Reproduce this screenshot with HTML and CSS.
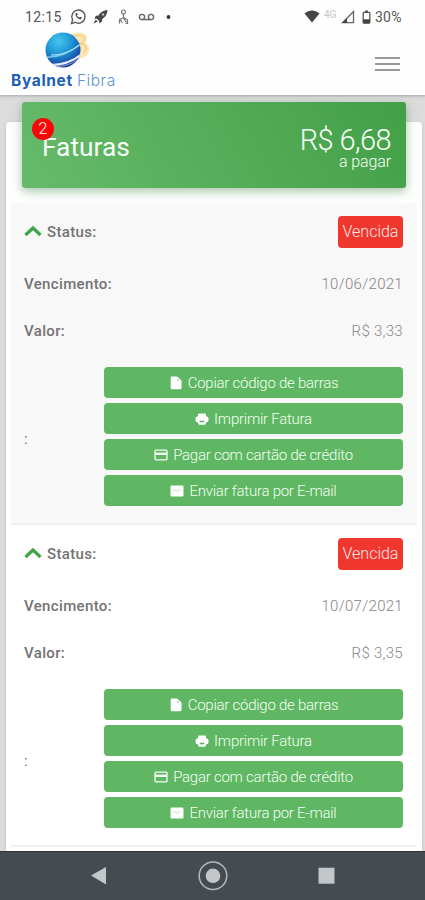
FILE: index.html
```html
<!DOCTYPE html>
<html lang="pt-BR">
<head>
<meta charset="utf-8">
<title>Byalnet Fibra</title>
<link rel="stylesheet" href="styles.css">
</head>
<body>
<svg class="defs" width="0" height="0">
  <symbol id="chevron" viewBox="0 0 18 12"><path d="M1.500 10 9 3l7.500 7" fill="none" stroke="#3fa648" stroke-width="3.2"/></symbol>
  <symbol id="file" viewBox="0 0 14 14"><path d="M3 .5h5L12.500 4.500V12a1.300 1.300 0 0 1-1.300 1.300H3A1.300 1.300 0 0 1 1.700 12V1.800A1.300 1.300 0 0 1 3 .5z" fill="#fff"/><path d="M8.500 3.200v1h1" fill="none" stroke="#5fb763" stroke-width=".8"/></symbol>
  <symbol id="printer" viewBox="0 0 14 14"><path d="M4 1.500h6a1 1 0 0 1 1 1v1.700A2.500 2.500 0 0 1 13.500 6.700v1.500a2 2 0 0 1-2 2h-.3c-.3 1.600-1 2.600-2.200 2.600H5c-1.200 0-1.900-1-2.200-2.600h-.3a2 2 0 0 1-2-2V6.700A2.500 2.500 0 0 1 3 4.200V2.500a1 1 0 0 1 1-1z" fill="#fff"/><path d="M4.700 8.700h4.600v1.600H4.700z" fill="#5fb763"/></symbol>
  <symbol id="credit" viewBox="0 0 14 14"><rect x="1" y="2.200" width="12" height="9.600" rx="1" fill="none" stroke="#f4fbf4" stroke-width="1.300"/><path d="M1 5.800h12" stroke="#f4fbf4" stroke-width="2.400"/></symbol>
  <symbol id="mail" viewBox="0 0 14 14"><rect x=".5" y="1.500" width="13" height="11" rx="1.200" fill="#fff"/><path d="m3.500 5 3.500 2.300L10.500 5" fill="none" stroke="#b5dcb7" stroke-width=".8"/></symbol>
</svg>

<header class="header">
  <div class="status-bar">
    <span class="clock">12:15</span>
    <svg class="left-icons" width="104" height="18" viewBox="0 0 104 18" fill="none" stroke="#555">
      <path d="m1.500 15.500 1.100-3.800A6.600 6.600 0 1 1 5.100 14.300z" stroke-width="1.300"/>
      <path d="M5.600 5.300c-.8 3 2.300 6.300 5.500 6l1-1.500-2-1.100-.8.900C8 9 7.300 8.200 7 7.300l.8-.8-.8-1.800z" fill="#555" stroke="none"/>
      <path d="M37.500 2c-5 .4-7.500 3-9 5.500l-2.500.3-1.800 2.700 2.700.2 2.300 2.300.2 2.400 2.600-2 .3-2.500c2.600-1.600 4.900-4 5.200-8.900zM25.700 11.500l-2.300 4.200 4.300-2.200z" fill="#484848" stroke="none"/><circle cx="33" cy="6.500" r="1.200" fill="#bbb" stroke="none"/>
      <g stroke="#777" stroke-width="1.200"><circle cx="53.500" cy="4" r="2"/><path d="M53.500 6v3.500l-4 2.500v3.500m4-6 4 2.500v3.500h-2m-6-5 3 4.500m1-4.500 3 4"/></g>
      <g stroke="#666" stroke-width="1.400"><circle cx="72" cy="9" r="2.600"/><circle cx="81" cy="9" r="2.600"/><path d="M72 11.600h9"/></g>
      <circle cx="98.500" cy="9" r="1.900" fill="#333" stroke="none"/>
    </svg>
    <svg class="wifi" width="16" height="13" viewBox="0 0 16 13"><path d="M.5 3.500C5-.5 11-.5 15.500 3.500L8 12.500z" fill="#444"/></svg>
    <span class="network">4G</span>
    <svg class="signal" width="14" height="14" viewBox="0 0 14 14"><path d="M1.500 12.700 12.500 1.500v11.200z" fill="none" stroke="#666" stroke-width="1.300"/><path d="M1 13 6 8v5z" fill="#444"/></svg>
    <svg class="battery" width="9" height="14" viewBox="0 0 9 14"><path d="M3 .5h3v2H3z" fill="#555"/><rect x="1.200" y="2.300" width="6.600" height="10.800" rx=".8" fill="none" stroke="#555" stroke-width="1.300"/><path d="M1 9.300h7v4H1z" fill="#444"/></svg>
    <span class="percent">30%</span>
  </div>
  <div class="nav-row">
    <div class="brand">
      <svg class="globe" width="48" height="38" viewBox="0 0 48 38">
        <defs>
          <radialGradient id="ball" cx=".38" cy=".25" r=".8"><stop offset="0" stop-color="#46c5f0"/><stop offset=".5" stop-color="#1d91d3"/><stop offset=".85" stop-color="#194ba4"/><stop offset="1" stop-color="#25318e"/></radialGradient>
          <clipPath id="ball-clip"><circle cx="19" cy="19" r="17.500"/></clipPath>
        </defs>
        <path d="M27 4c5-4 16-3 16 3 0 4-2 5-2 5s6 3 4 9c-2 5-10 8-15 6z" fill="#fbe6b6"/>
        <path d="M31 5c6-2 10 0 9 4-1 4-6 4-6 4m2 0c7 0 8 4 4 8" fill="none" stroke="#f4d086" stroke-width="1.500"/>
        <circle cx="19" cy="19" r="17.500" fill="url(#ball)"/>
        <g clip-path="url(#ball-clip)" fill="none"><path d="M0 26c12 1 25-3 38-14" stroke="#73c9ed" stroke-width="1.500"/><path d="M7 24c12 0 21-4 31-12" stroke="#b9e0f4" stroke-width="1"/><path d="M7 34c10 0 23-3 34-14" stroke="#e8ecfa" stroke-width="2.200"/><path d="M12 36c12-1 22-6 27-12" stroke="#8f9bd6" stroke-width="1"/></g>
      </svg>
      <div class="brand-name"><b>Byalnet</b><span>Fibra</span></div>
    </div>
    <div class="menu"><i></i><i></i><i></i></div>
  </div>
</header>

<main class="page">
  <section class="card">
    <div class="banner">
      <div class="title">Faturas<span class="badge">2</span></div>
      <div class="total"><span class="amount">R$ 6,68</span><span class="due">a pagar</span></div>
    </div>
    <article class="invoice shaded">
      <div class="row status"><span class="label"><svg class="chevron"><use href="#chevron"/></svg>Status:</span><span class="tag">Vencida</span></div>
      <div class="row date"><span class="label">Vencimento:</span><span class="value">10/06/2021</span></div>
      <div class="row price"><span class="label">Valor:</span><span class="value">R$ 3,33</span></div>
      <div class="row actions"><span class="label">:</span>
        <div class="buttons">
          <div class="btn"><svg><use href="#file"/></svg><span>Copiar código de barras</span></div>
          <div class="btn"><svg><use href="#printer"/></svg><span>Imprimir Fatura</span></div>
          <div class="btn"><svg><use href="#credit"/></svg><span>Pagar com cartão de crédito</span></div>
          <div class="btn"><svg><use href="#mail"/></svg><span>Enviar fatura por E-mail</span></div>
        </div>
      </div>
    </article>
    <article class="invoice">
      <div class="row status"><span class="label"><svg class="chevron"><use href="#chevron"/></svg>Status:</span><span class="tag">Vencida</span></div>
      <div class="row date"><span class="label">Vencimento:</span><span class="value">10/07/2021</span></div>
      <div class="row price"><span class="label">Valor:</span><span class="value">R$ 3,35</span></div>
      <div class="row actions"><span class="label">:</span>
        <div class="buttons">
          <div class="btn"><svg><use href="#file"/></svg><span>Copiar código de barras</span></div>
          <div class="btn"><svg><use href="#printer"/></svg><span>Imprimir Fatura</span></div>
          <div class="btn"><svg><use href="#credit"/></svg><span>Pagar com cartão de crédito</span></div>
          <div class="btn"><svg><use href="#mail"/></svg><span>Enviar fatura por E-mail</span></div>
        </div>
      </div>
    </article>
  </section>
</main>

<footer class="system-nav">
  <svg width="425" height="48" viewBox="0 0 425 48"><path d="M91 23.500 106 15v17.500z" fill="#c3c7c9"/><circle cx="213" cy="23.800" r="13.800" fill="none" stroke="#b4b9bc" stroke-width="1.500"/><circle cx="213" cy="23.800" r="7.300" fill="#c3c7c9"/><path d="M318.500 15.700h16v16h-16z" fill="#c3c7c9"/></svg>
</footer>
</body>
</html>
```

FILE: styles.css
```css
* { box-sizing: border-box; }
body {
  margin: 0;
  width: 425px;
  height: 900px;
  overflow: hidden;
  display: flex;
  flex-direction: column;
  background: #dcdcdc;
  font-family: Roboto, "Liberation Sans", sans-serif;
}
svg { display: block; flex: none; }
.defs { position: absolute; }
.header {
  flex: none;
  height: 95px;
  background: #fefefe;
  box-shadow: 0 0 3px 1px #a5a5a5;
}
.status-bar {
  height: 32px;
  display: flex;
  align-items: center;
  padding: 1px 0 0 25px;
  color: #555;
  font-size: 14px;
}
.clock { width: 45px; letter-spacing: .4px; }
.left-icons { margin-right: 129px; }
.wifi { margin-left: 1px; }
.network { width: 16px; margin: -5px 0 0 4px; font-size: 10px; color: #c4c4c4; }
.signal { margin-left: 1px; }
.battery { margin-left: 7px; }
.percent { margin-left: 4px; letter-spacing: .2px; }
.nav-row { height: 63px; display: flex; justify-content: space-between; padding: 0 25px 0 11px; }
.brand { width: 108px; }
.globe { margin-left: 33px; margin-top: -1px; }
.brand-name {
  display: flex;
  gap: 4px;
  padding-top: 1px;
  font: 15.5px/22px Inter, "Open Sans", sans-serif;
  white-space: nowrap;
}
.brand-name b { width: 62px; color: #1a5fb4; font-weight: 700; letter-spacing: .65px; }
.brand-name span { color: #5b93cf; font-weight: 300; letter-spacing: .5px; }
.menu { display: flex; flex-direction: column; gap: 4px; padding-top: 25px; }
.menu i { width: 25px; height: 2px; background: #999; }
.page { flex: 1; min-height: 0; padding: 27px 3px 0 6px; overflow: hidden; }
.card {
  display: flow-root;
  height: 740px;
  padding: 0 5px;
  background: #fff;
  border-radius: 4px 4px 0 0;
  box-shadow: 0 1px 3px #b9b9b9;
}
.banner {
  height: 86px;
  margin: -20px 11px 15px;
  padding: 23px 15px 0 20px;
  display: flex;
  justify-content: space-between;
  color: #f8fff8;
  background: linear-gradient(60deg, #66bb6a, #43a047);
  border-radius: 3px;
  box-shadow: 0 4px 14px rgba(76, 175, 80, .3), 0 3px 7px rgba(0, 0, 0, .16);
}
.title { position: relative; padding-top: 6px; font-size: 26.3px; line-height: 32px; }
.badge {
  position: absolute;
  left: -10px;
  top: -7px;
  width: 22px;
  height: 22px;
  border-radius: 50%;
  background: #fb0509;
  font-size: 16px;
  font-weight: 300;
  line-height: 22px;
  text-align: center;
}
.total { display: flex; flex-direction: column; align-items: flex-end; font-weight: 300; }
.amount { padding-top: 1px; font-size: 29px; line-height: 28px; letter-spacing: -.6px; }
.due { font-size: 16px; line-height: 16px; letter-spacing: -.1px; }
.invoice { height: 321.5px; padding: 1px 14px 0 13px; border-bottom: 2px solid #f0f0f0; }
.invoice:first-of-type { height: 322px; }
.shaded { background: #f8f8f8; }
.row { display: flex; align-items: center; justify-content: space-between; }
.status { height: 56px; }
.date { height: 48px; }
.price { height: 46px; }
.actions { padding-top: 13px; }
.actions .label { padding-top: 4px; font-weight: 400; }
.label { display: flex; align-items: center; color: #737373; font-size: 15px; font-weight: 500; letter-spacing: .35px; }
.chevron { width: 18px; height: 12px; margin-right: 5px; margin-top: -3px; }
.tag {
  width: 65px;
  height: 32px;
  border-radius: 4px;
  background: #f0372e;
  color: #ffe8e6;
  font-size: 16px;
  font-weight: 300;
  line-height: 32px;
  text-align: center;
}
.value { color: #858585; font-size: 15px; font-weight: 300; letter-spacing: .3px; }
.buttons { width: 299px; display: flex; flex-direction: column; gap: 5px; }
.btn {
  height: 31px;
  display: flex;
  align-items: center;
  justify-content: center;
  gap: 5px;
  border-radius: 4px;
  background: #5fb763;
  color: #f4fff4;
  font-size: 15px;
  font-weight: 300;
  letter-spacing: -.25px;
}
.btn svg { width: 14px; height: 14px; }
.system-nav { flex: none; height: 49px; background: #444c52; border-top: 1px solid #2b3338; }
```
